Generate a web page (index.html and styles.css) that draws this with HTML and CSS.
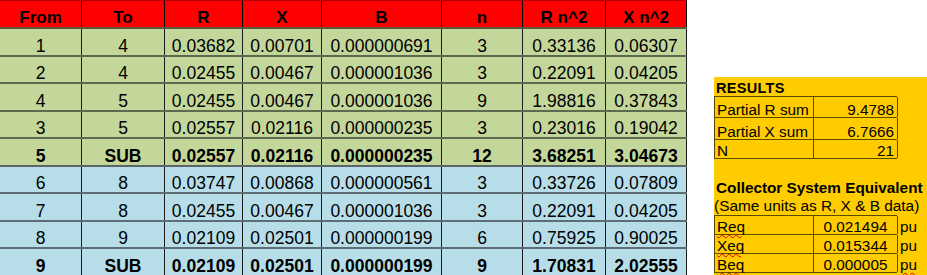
FILE: index.html
```html
<!DOCTYPE html>
<html>
<head>
<meta charset="utf-8">
<link rel="stylesheet" href="styles.css">
</head>
<body>
<div class="sheet">
  <div class="grid">
    <div class="row head">
      <div class="c">From</div><div class="c">To</div><div class="c">R</div><div class="c">X</div><div class="c">B</div><div class="c">n</div><div class="c">R n^2</div><div class="c">X n^2</div>
    </div>
    <div class="row green">
      <div class="c">1</div><div class="c">4</div><div class="c">0.03682</div><div class="c">0.00701</div><div class="c">0.000000691</div><div class="c">3</div><div class="c">0.33136</div><div class="c">0.06307</div>
    </div>
    <div class="row green">
      <div class="c">2</div><div class="c">4</div><div class="c">0.02455</div><div class="c">0.00467</div><div class="c">0.000001036</div><div class="c">3</div><div class="c">0.22091</div><div class="c">0.04205</div>
    </div>
    <div class="row green">
      <div class="c">4</div><div class="c">5</div><div class="c">0.02455</div><div class="c">0.00467</div><div class="c">0.000001036</div><div class="c">9</div><div class="c">1.98816</div><div class="c">0.37843</div>
    </div>
    <div class="row green">
      <div class="c">3</div><div class="c">5</div><div class="c">0.02557</div><div class="c">0.02116</div><div class="c">0.000000235</div><div class="c">3</div><div class="c">0.23016</div><div class="c">0.19042</div>
    </div>
    <div class="row green total">
      <div class="c">5</div><div class="c">SUB</div><div class="c">0.02557</div><div class="c">0.02116</div><div class="c">0.000000235</div><div class="c">12</div><div class="c">3.68251</div><div class="c">3.04673</div>
    </div>
    <div class="row blue">
      <div class="c">6</div><div class="c">8</div><div class="c">0.03747</div><div class="c">0.00868</div><div class="c">0.000000561</div><div class="c">3</div><div class="c">0.33726</div><div class="c">0.07809</div>
    </div>
    <div class="row blue">
      <div class="c">7</div><div class="c">8</div><div class="c">0.02455</div><div class="c">0.00467</div><div class="c">0.000001036</div><div class="c">3</div><div class="c">0.22091</div><div class="c">0.04205</div>
    </div>
    <div class="row blue">
      <div class="c">8</div><div class="c">9</div><div class="c">0.02109</div><div class="c">0.02501</div><div class="c">0.000000199</div><div class="c">6</div><div class="c">0.75925</div><div class="c">0.90025</div>
    </div>
    <div class="row blue total">
      <div class="c">9</div><div class="c">SUB</div><div class="c">0.02109</div><div class="c">0.02501</div><div class="c">0.000000199</div><div class="c">9</div><div class="c">1.70831</div><div class="c">2.02555</div>
    </div>
  </div>

  <div class="panel">
    <div class="title">RESULTS</div>
    <div class="rtable">
      <div class="rrow r1"><div class="lbl">Partial R sum</div><div class="val">9.4788</div></div>
      <div class="rrow r2"><div class="lbl">Partial X sum</div><div class="val">6.7666</div></div>
      <div class="rrow r3"><div class="lbl">N</div><div class="val">21</div></div>
    </div>
    <div class="eq-title">Collector System Equivalent</div>
    <div class="eq-sub">(Same units as R, X &amp; B data)</div>
    <div class="etable">
      <div class="erow"><div class="elbl"><span class="spell">Req</span></div><div class="eval">0.021494</div><div class="unit">pu</div></div>
      <div class="erow"><div class="elbl"><span class="spell">Xeq</span></div><div class="eval">0.015344</div><div class="unit">pu</div></div>
      <div class="erow"><div class="elbl"><span class="spell">Beq</span></div><div class="eval">0.000005</div><div class="unit"><span class="spell">pu</span></div></div>
    </div>
  </div>
</div>
</body>
</html>
```

FILE: styles.css
```css
* { box-sizing: border-box; }

html, body {
  margin: 0;
  padding: 0;
  background: #ffffff;
}

body {
  font-family: "Liberation Sans", Arial, sans-serif;
  color: #000000;
  width: 927px;
  height: 275px;
  overflow: hidden;
}

.sheet {
  display: flex;
  align-items: flex-start;
  gap: 27px;
}

/* ---------- main table ---------- */
.grid {
  width: 687px;
  flex: none;
}

.row {
  display: grid;
  grid-template-columns: 82px 83px 78px 79px 120px 81px 83px 81px;
  height: 27.5px;
  border-bottom: 2px solid #5e6a50;
  font-size: 17.5px;
}

.row .c {
  display: flex;
  align-items: flex-end;
  justify-content: center;
  border-right: 1px solid #1a1a1a;
  line-height: 17px;
  white-space: nowrap;
}

.head {
  height: 29px;
  background: #ff0000;
  border-top: 1px solid #b00000;
  font-size: 17px;
  font-weight: bold;
  border-bottom-color: #5a5a3e;
}

.head .c {
  border-right-color: #000000;
  padding-bottom: 1px;
}

.green { background: #c4d79b; }
.blue { background: #b7dee8; border-bottom-color: #5c6e73; }
.green.total { border-bottom-color: #5b6468; }

.total { font-weight: bold; }

/* ---------- results panel ---------- */
.panel {
  flex: 1;
  margin-top: 77px;
  height: 198px;
  background: #ffcc00;
  font-size: 15.3px;
}

.title {
  height: 19px;
  display: flex;
  align-items: flex-end;
  padding-left: 2px;
  font-size: 14.5px;
  font-weight: bold;
  line-height: 15px;
  letter-spacing: 0.3px;
}

.rtable {
  width: 183px;
  border-top: 1px solid #5b4a00;
  border-left: 1px solid #5b4a00;
}

.rrow {
  display: grid;
  grid-template-columns: 99px 84px;
  border-bottom: 1px solid #5b4a00;
  height: 21px;
}

.rrow.r2 { height: 22px; }
.rrow.r3 { height: 19px; }

.lbl, .val, .elbl, .eval {
  display: flex;
  align-items: flex-end;
  line-height: 15px;
  white-space: nowrap;
  border-right: 1px solid #5b4a00;
}

.lbl, .elbl { padding-left: 2px; }

.val {
  justify-content: flex-end;
  padding-right: 3px;
}

.eq-title {
  margin-top: 20px;
  padding-left: 2px;
  font-weight: bold;
  line-height: 18px;
  white-space: nowrap;
}

.eq-sub {
  font-size: 15.4px;
  line-height: 18px;
  white-space: nowrap;
}

.etable {
  border-top: 1px solid #5b4a00;
  border-left: 1px solid #5b4a00;
  width: 183px;
}

.erow {
  display: grid;
  grid-template-columns: 99px 84px 30px;
  height: 19px;
  border-bottom: 1px solid #5b4a00;
}

.eval {
  justify-content: center;
}

.unit {
  display: flex;
  align-items: flex-end;
  line-height: 15px;
  padding-left: 2px;
}

.spell {
  text-decoration: underline wavy #e00000;
  text-decoration-thickness: 1px;
  text-underline-offset: 2px;
}
```
